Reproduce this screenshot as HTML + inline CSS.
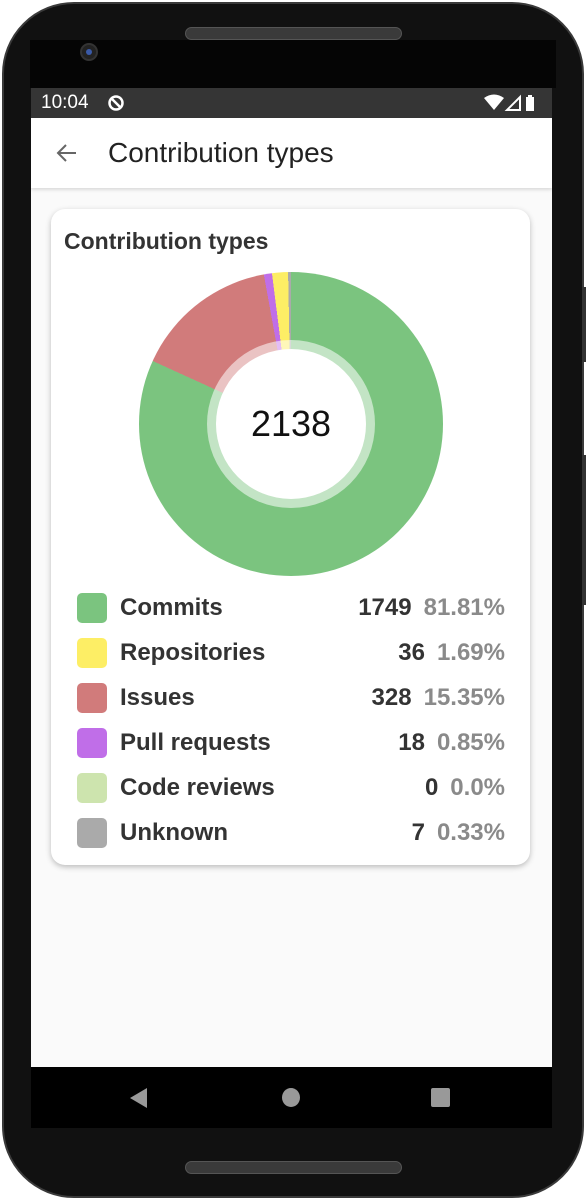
<!DOCTYPE html>
<html><head><style>
*{margin:0;padding:0;box-sizing:border-box}
body{width:586px;height:1200px;background:#fff;position:relative;overflow:hidden;font-family:"Liberation Sans",sans-serif}
.phone{position:absolute;left:2px;top:2px;width:582px;height:1196px;border-radius:72px;background:#111;border:2px solid #3a3a3a}
.btn{position:absolute;right:0;width:4px;background:#333}
.speaker{position:absolute;left:185px;width:217px;height:13px;border-radius:7px;background:#3a3a3a;border:1px solid #555}
.screen{position:absolute;left:31px;top:88px;width:521px;height:1040px;background:#fafafa;overflow:hidden}
.status{height:30px;background:#353535;color:#fff;font-size:19px;line-height:30px;padding-left:10px;position:relative}
.appbar{height:70px;background:#fff;position:relative;box-shadow:0 2px 3px rgba(0,0,0,.12)}
.nav{position:absolute;left:0;top:979px;width:521px;height:61px;background:#000}
.card{position:absolute;left:20px;top:121px;width:479px;height:656px;background:#fff;border-radius:14px;box-shadow:0 2px 6px rgba(0,0,0,.25)}
.row{position:absolute;left:0;width:479px;height:34px;font-size:24px;font-weight:bold;color:#333}
.sq{position:absolute;left:26px;top:2px;width:30px;height:30px;border-radius:5px}
.lab{position:absolute;left:69px;top:3px}
.r{position:absolute;right:25px;top:3px}
.pct{color:#8a8a8a;margin-left:12px}
</style></head><body>
<div class="phone"></div>
<div style="position:absolute;left:30px;top:40px;width:526px;height:48px;background:#050505"></div>
<div class="btn" style="top:287px;height:75px"></div>
<div class="btn" style="top:455px;height:150px"></div>
<div class="speaker" style="top:27px"></div>
<div class="speaker" style="top:1161px"></div>
<div style="position:absolute;left:80px;top:43px;width:18px;height:18px;border-radius:50%;background:#222;border:2px solid #333"><div style="position:absolute;left:4px;top:4px;width:6px;height:6px;border-radius:50%;background:#3a5aa8"></div></div>
<div class="screen">
 <div class="status">10:04
  <svg style="position:absolute;left:76px;top:6px" width="18" height="18" viewBox="0 0 18 18"><circle cx="9" cy="9" r="6.5" fill="none" stroke="#fff" stroke-width="2.5"/><path d="M5 5L13 13" stroke="#fff" stroke-width="2.5"/></svg>
  <svg style="position:absolute;right:8px;top:6px" width="60" height="18" viewBox="0 0 60 18"><path d="M0 4Q10 -3 20 4L10 16Z" fill="#fff"/><path d="M36 3V16H23Z" fill="none" stroke="#fff" stroke-width="2"/><rect x="42" y="3" width="8" height="14" fill="#fff"/><rect x="44" y="1" width="4" height="2" fill="#fff"/></svg>
 </div>
 <div class="appbar">
  <svg style="position:absolute;left:24px;top:24px" width="22" height="22" viewBox="0 0 22 22"><path d="M21 11H3M11 3L3 11L11 19" fill="none" stroke="#666" stroke-width="2"/></svg>
  <div style="position:absolute;left:77px;top:19px;font-size:28px;color:#222">Contribution types</div>
 </div>
 <div class="card">
  <div style="position:absolute;left:13px;top:19px;font-size:23px;font-weight:bold;color:#333">Contribution types</div>
  <div style="position:absolute;left:88px;top:63px;width:304px;height:304px;border-radius:50%;background:conic-gradient(#7bc47f 0 294.5deg,#d17b7b 294.5deg 349.7deg,#c06ee8 349.7deg 352.8deg,#fdee65 352.8deg 358.9deg,#aaa 358.9deg 360deg)"></div>
  <div style="position:absolute;left:156px;top:131px;width:168px;height:168px;border-radius:50%;background:rgba(255,255,255,.55)"></div>
  <div style="position:absolute;left:165px;top:140px;width:150px;height:150px;border-radius:50%;background:#fff;text-align:center;line-height:150px;font-size:36px;color:#111">2138</div>
  <div class="row" style="top:382px"><div class="sq" style="background:#7bc47f"></div><span class="lab">Commits</span><span class="r">1749<span class="pct">81.81%</span></span></div>
  <div class="row" style="top:427px"><div class="sq" style="background:#fdee65"></div><span class="lab">Repositories</span><span class="r">36<span class="pct">1.69%</span></span></div>
  <div class="row" style="top:472px"><div class="sq" style="background:#d17b7b"></div><span class="lab">Issues</span><span class="r">328<span class="pct">15.35%</span></span></div>
  <div class="row" style="top:517px"><div class="sq" style="background:#c06ee8"></div><span class="lab">Pull requests</span><span class="r">18<span class="pct">0.85%</span></span></div>
  <div class="row" style="top:562px"><div class="sq" style="background:#cde4ae"></div><span class="lab">Code reviews</span><span class="r">0<span class="pct">0.0%</span></span></div>
  <div class="row" style="top:607px"><div class="sq" style="background:#aaa"></div><span class="lab">Unknown</span><span class="r">7<span class="pct">0.33%</span></span></div>
 </div>
 <div class="nav">
  <svg style="position:absolute;left:98px;top:20px" width="20" height="22" viewBox="0 0 20 22"><path d="M18 1V21L1 11Z" fill="#999"/></svg>
  <div style="position:absolute;left:251px;top:21px;width:18px;height:19px;border-radius:50%;background:#999"></div>
  <div style="position:absolute;left:400px;top:21px;width:19px;height:19px;border-radius:2px;background:#999"></div>
 </div>
</div>
</body></html>
